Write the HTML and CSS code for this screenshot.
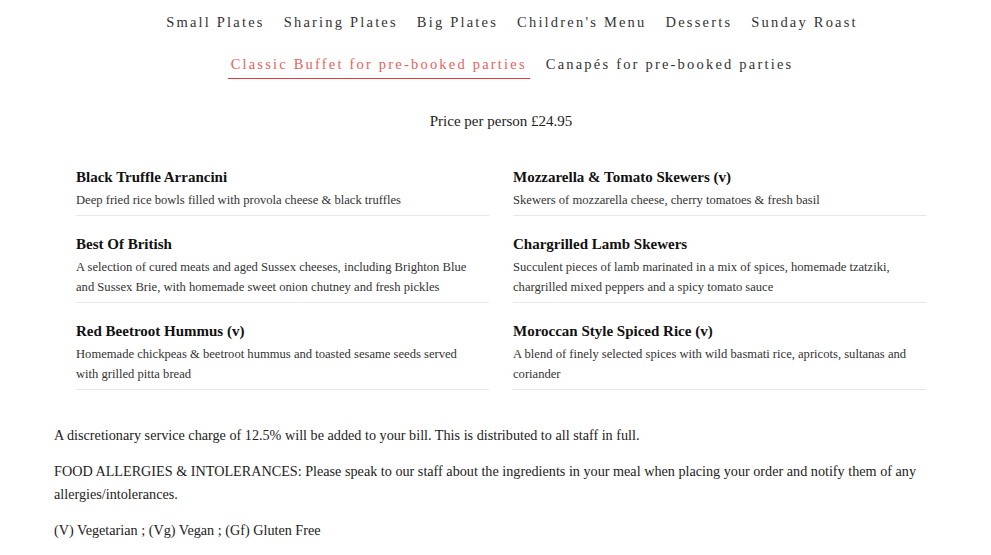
FILE: index.html
```html
<!DOCTYPE html>
<html lang="en">
<head>
  <meta charset="UTF-8">
  <meta name="viewport" content="width=device-width, initial-scale=1.0">
  <title>Menu - Classic Buffet</title>
  <link rel="stylesheet" href="styles.css">
</head>
<body>
  <div class="container">
    <nav class="tabs">
      <div class="tab-row">
        <a href="#">Small Plates</a>
        <a href="#">Sharing Plates</a>
        <a href="#">Big Plates</a>
        <a href="#">Children's Menu</a>
        <a href="#">Desserts</a>
        <a href="#">Sunday Roast</a>
      </div>
      <div class="tab-row">
        <a href="#" class="active">Classic Buffet for pre-booked parties</a>
        <a href="#">Canapés for pre-booked parties</a>
      </div>
    </nav>

    <p class="price">Price per person £24.95</p>

    <div class="menu">
      <div class="item">
        <h3>Black Truffle Arrancini</h3>
        <p>Deep fried rice bowls filled with provola cheese &amp; black truffles</p>
      </div>
      <div class="item">
        <h3>Mozzarella &amp; Tomato Skewers (v)</h3>
        <p>Skewers of mozzarella cheese, cherry tomatoes &amp; fresh basil</p>
      </div>
      <div class="item">
        <h3>Best Of British</h3>
        <p>A selection of cured meats and aged Sussex cheeses, including Brighton Blue and Sussex Brie, with homemade sweet onion chutney and fresh pickles</p>
      </div>
      <div class="item">
        <h3>Chargrilled Lamb Skewers</h3>
        <p>Succulent pieces of lamb marinated in a mix of spices, homemade tzatziki, chargrilled mixed peppers and a spicy tomato sauce</p>
      </div>
      <div class="item">
        <h3>Red Beetroot Hummus (v)</h3>
        <p>Homemade chickpeas &amp; beetroot hummus and toasted sesame seeds served with grilled pitta bread</p>
      </div>
      <div class="item">
        <h3>Moroccan Style Spiced Rice (v)</h3>
        <p>A blend of finely selected spices with wild basmati rice, apricots, sultanas and coriander</p>
      </div>
    </div>

    <div class="notes">
      <p>A discretionary service charge of 12.5% will be added to your bill. This is distributed to all staff in full.</p>
      <p>FOOD ALLERGIES &amp; INTOLERANCES: Please speak to our staff about the ingredients in your meal when placing your order and notify them of any allergies/intolerances.</p>
      <p>(V) Vegetarian ; (Vg) Vegan ; (Gf) Gluten Free</p>
    </div>
  </div>
</body>
</html>
```

FILE: styles.css
```css
body { margin: 0; font-family: 'Liberation Serif', 'Times New Roman', serif; color: #222; background: #fff; }
.container { width: 894px; margin: 0 0 0 54px; }

.tabs { padding: 14px 0 0 22px; }
.tab-row { display: flex; justify-content: center; gap: 13px; margin-bottom: 19px; }
.tab-row a { color: #333; text-decoration: none; font-size: 14.5px; letter-spacing: 2.2px; padding: 0 3px 5px; border-bottom: 1px solid transparent; }
.tab-row a.active { color: #e8615d; border-bottom-color: #e03a3a; }

.price { text-align: center; font-size: 15px; margin: 34px 0 37px; }

.menu { display: grid; grid-template-columns: 1fr 1fr; column-gap: 24px; row-gap: 18px; padding: 0 22px; }
.item { border-bottom: 1px solid #e8e8e8; padding-bottom: 5px; }
.item h3 { margin: 0 0 3px; font-size: 15px; line-height: 20px; font-weight: bold; color: #111; }
.item p { margin: 0; padding-right: 12px; font-size: 12.6px; line-height: 20px; color: #333; }

.notes { margin-top: 34px; font-size: 14.2px; line-height: 23px; color: #222; }
.notes p { margin: 0 0 13px; }
```
